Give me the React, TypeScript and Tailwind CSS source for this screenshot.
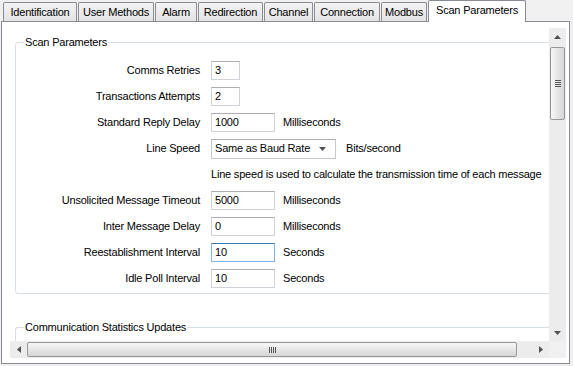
import React from 'react';

const tabs = [
  { label: 'Identification', w: 'w-[74px]' },
  { label: 'User Methods', w: 'w-[76px]' },
  { label: 'Alarm', w: 'w-[42px]' },
  { label: 'Redirection', w: 'w-[65px]' },
  { label: 'Channel', w: 'w-[49px]' },
  { label: 'Connection', w: 'w-[66px]' },
  { label: 'Modbus', w: 'w-[46px]' },
];

type Row = {
  label: string;
  value?: string;
  w?: string;
  unit?: string;
  focused?: boolean;
  select?: boolean;
  note?: string;
};

const rows: Row[] = [
  { label: 'Comms Retries', value: '3', w: 'w-[29px]' },
  { label: 'Transactions Attempts', value: '2', w: 'w-[29px]' },
  { label: 'Standard Reply Delay', value: '1000', w: 'w-[64px]', unit: 'Milliseconds' },
  { label: 'Line Speed', value: 'Same as Baud Rate', select: true, unit: 'Bits/second' },
  { label: '', note: 'Line speed is used to calculate the transmission time of each message' },
  { label: 'Unsolicited Message Timeout', value: '5000', w: 'w-[64px]', unit: 'Milliseconds' },
  { label: 'Inter Message Delay', value: '0', w: 'w-[64px]', unit: 'Milliseconds' },
  { label: 'Reestablishment Interval', value: '10', w: 'w-[64px]', unit: 'Seconds', focused: true },
  { label: 'Idle Poll Interval', value: '10', w: 'w-[64px]', unit: 'Seconds' },
];

const Arrow = ({ dir }: { dir: 'up' | 'down' | 'left' | 'right' }) => {
  const d = {
    up: 'M3.5 0 L7 4 L0 4 Z',
    down: 'M0 0 L7 0 L3.5 4 Z',
    left: 'M4 0 L4 7 L0 3.5 Z',
    right: 'M0 0 L4 3.5 L0 7 Z',
  }[dir];
  const vert = dir === 'up' || dir === 'down';
  return (
    <svg width={vert ? 7 : 4} height={vert ? 4 : 7} viewBox={vert ? '0 0 7 4' : '0 0 4 7'}>
      <path d={d} fill="#505050" />
    </svg>
  );
};

export default function App() {
  return (
    <div className="w-[573px] h-[366px] bg-[#f0f0f0] overflow-hidden font-['Liberation_Sans',Arial,sans-serif] text-[11px] leading-[13px] tracking-[-0.2px] text-black">
      {/* Tab strip */}
      <div className="flex items-end h-[21px] pl-[3px] gap-[1px]">
        {tabs.map(t => (
          <div
            key={t.label}
            className={`${t.w} h-[19px] shrink-0 border border-b-0 border-[#898c95] bg-linear-to-b from-[#f3f3f3] to-[#e3e3e3] flex items-center justify-center rounded-t-[2px] whitespace-nowrap`}
          >
            {t.label}
          </div>
        ))}
        <div className="w-[98px] h-[22px] -mb-[1px] shrink-0 relative z-10 bg-white border border-b-0 border-[#898c95] flex items-center justify-center pb-[2px] rounded-t-[2px] whitespace-nowrap">
          Scan Parameters
        </div>
      </div>

      {/* Tab page */}
      <div className="ml-[1px] w-[569px] h-[343px] bg-white border border-[#898c95] pt-[6px] pl-[8px]">
        <div className="w-[556px] h-[330px] flex flex-col">
          <div className="flex h-[313px]">
            {/* Scrollable content */}
            <div className="w-[539px] h-full overflow-hidden pl-[5px] pt-[14px]">
              <div className="relative w-[560px] h-[252px] border border-[#d5dfe5] rounded-[3px] pt-[18px] flex flex-col gap-[7px]">
                <div className="absolute left-[8px] -top-[7px] bg-white px-[1px]">Scan Parameters</div>
                {rows.map((r, i) => (
                  <div key={i} className="flex items-center h-[19px]">
                    <div className="w-[184px] shrink-0 text-right whitespace-nowrap">{r.label}</div>
                    {r.note ? (
                      <div className="ml-[11px] whitespace-nowrap">{r.note}</div>
                    ) : r.select ? (
                      <div className="ml-[11px] w-[125px] h-[20px] border border-[#c5c8ce] border-t-[#abadb3] flex items-center pl-[3px] pr-[9px] justify-between">
                        <span>{r.value}</span>
                        <Arrow dir="down" />
                      </div>
                    ) : (
                      <div
                        className={`ml-[11px] ${r.w} h-[19px] border ${r.focused ? 'border-[#7eb4ea] border-t-[#3d7bad]' : 'border-[#cfd2d8] border-t-[#abadb3]'} flex items-center pl-[3px]`}
                      >
                        {r.value}
                      </div>
                    )}
                    {r.unit && <div className={r.select ? 'ml-[10px]' : 'ml-[8px]'}>{r.unit}</div>}
                  </div>
                ))}
              </div>
              <div className="relative mt-[33px] w-[560px] h-[40px] border-t border-l border-[#d5dfe5] rounded-tl-[3px]">
                <div className="absolute left-[8px] -top-[7px] bg-white px-[1px] whitespace-nowrap">Communication Statistics Updates</div>
              </div>
            </div>

            {/* Vertical scrollbar */}
            <div className="w-[17px] h-full bg-[#ececec] flex flex-col">
              <div className="h-[17px] flex items-center justify-center">
                <Arrow dir="up" />
              </div>
              <div className="mt-[2px] mx-[1px] h-[73px] border border-[#979797] rounded-[2px] bg-linear-to-r from-[#f6f6f6] to-[#d6d6d6] flex flex-col items-center justify-center gap-[1px]">
                <div className="w-[6px] h-[1px] bg-[#555]" />
                <div className="w-[6px] h-[1px] bg-[#555]" />
                <div className="w-[6px] h-[1px] bg-[#555]" />
                <div className="w-[6px] h-[1px] bg-[#555]" />
              </div>
              <div className="flex-1" />
              <div className="h-[17px] flex items-center justify-center">
                <Arrow dir="down" />
              </div>
            </div>
          </div>

          {/* Horizontal scrollbar */}
          <div className="flex h-[17px]">
            <div className="w-[539px] h-full bg-[#ececec] flex items-center">
              <div className="w-[17px] h-full flex items-center justify-center">
                <Arrow dir="left" />
              </div>
              <div className="w-[490px] h-[15px] border border-[#979797] rounded-[2px] bg-linear-to-b from-[#f6f6f6] to-[#d6d6d6] flex items-center justify-center gap-[1px]">
                <div className="w-[1px] h-[6px] bg-[#555]" />
                <div className="w-[1px] h-[6px] bg-[#555]" />
                <div className="w-[1px] h-[6px] bg-[#555]" />
                <div className="w-[1px] h-[6px] bg-[#555]" />
              </div>
              <div className="flex-1" />
              <div className="w-[17px] h-full flex items-center justify-center">
                <Arrow dir="right" />
              </div>
            </div>
            <div className="w-[17px] h-full bg-[#f0f0f0]" />
          </div>
        </div>
      </div>
    </div>
  );
}
